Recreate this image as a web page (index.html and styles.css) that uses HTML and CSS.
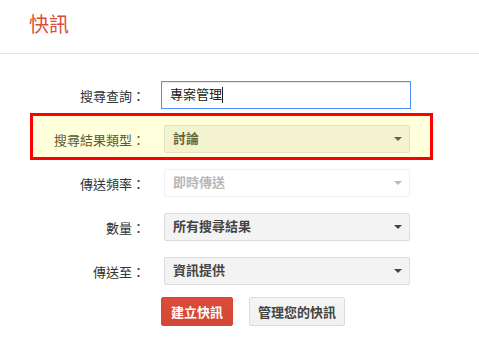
FILE: index.html
```html
<!DOCTYPE html>
<html lang="zh-Hant">
<head>
  <meta charset="UTF-8" />
  <title>快訊</title>
  <link rel="stylesheet" href="styles.css">
</head>
<body>
  <div class="header">
    <h1 class="title">快訊</h1>
  </div>

  <form class="alert-form">
    <div class="row">
      <label class="label" for="query">搜尋查詢：</label>
      <div class="query">專案管理<span class="caret"></span></div>
    </div>

    <div class="row highlight">
      <span class="label">搜尋結果類型：</span>
      <div class="select">討論</div>
    </div>

    <div class="row">
      <span class="label">傳送頻率：</span>
      <div class="select disabled">即時傳送</div>
    </div>

    <div class="row">
      <span class="label">數量：</span>
      <div class="select">所有搜尋結果</div>
    </div>

    <div class="row">
      <span class="label">傳送至：</span>
      <div class="select">資訊提供</div>
    </div>

    <div class="actions">
      <button type="button" class="btn btn-red">建立快訊</button>
      <button type="button" class="btn">管理您的快訊</button>
    </div>
  </form>
</body>
</html>
```

FILE: styles.css
```css
body {
  margin: 0;
  background: #fff;
  font-family: "Liberation Sans", "Noto Sans CJK TC", sans-serif;
  font-size: 13px;
  color: #222;
}
.header {
  padding: 13px 29px 16px;
  border-bottom: 1px solid #e5e5e5;
}
.title {
  margin: 0;
  font-size: 20px;
  font-weight: normal;
  line-height: 24px;
  color: #dd4b39;
}
.alert-form {
  display: flex;
  flex-direction: column;
  gap: 16px;
  width: 397px;
  margin: 27px 0 0 33px;
}
.row {
  display: grid;
  grid-template-columns: 112px 250px;
  column-gap: 16px;
  align-items: center;
  height: 28px;
}
.label {
  text-align: right;
  color: #333;
  white-space: nowrap;
}
.query {
  box-sizing: border-box;
  height: 28px;
  padding: 0 8px;
  border: 1px solid #4d90fe;
  box-shadow: inset 0 1px 2px rgba(0, 0, 0, 0.1);
  line-height: 26px;
  color: #222;
  display: flex;
  align-items: center;
}
.caret {
  display: inline-block;
  width: 1px;
  height: 16px;
  background: #222;
}
.select {
  position: relative;
  box-sizing: border-box;
  width: 246px;
  height: 28px;
  margin-left: 3px;
  padding: 0 8px;
  border: 1px solid #dcdcdc;
  border-radius: 2px;
  background: #f3f3f3;
  line-height: 26px;
  font-weight: bold;
  color: #444;
}
.select::after {
  content: "";
  position: absolute;
  right: 7px;
  top: 11px;
  border-left: 4px solid transparent;
  border-right: 4px solid transparent;
  border-top: 4px solid #444;
}
.select.disabled {
  background: #fff;
  border-color: #f0f0f0;
  color: #b8b8b8;
}
.select.disabled::after {
  border-top-color: #bbb;
}
.highlight {
  margin: -12px -3px -7px -3px;
  padding: 9px 0 4px;
  border: 3px solid #f00;
  background: #ffffdc;
}
.highlight .label {
  color: #5a5a33;
}
.highlight .select {
  background: #f3f3cf;
  border-color: #e3e3c0;
  color: #66663a;
}
.highlight .select::after {
  border-top-color: #66663a;
}
.actions {
  display: flex;
  gap: 16px;
  margin: -4px 0 0 128px;
}
.btn {
  box-sizing: border-box;
  height: 29px;
  padding: 0 8px;
  border: 1px solid #dcdcdc;
  border-radius: 2px;
  background: linear-gradient(#f5f5f5, #f1f1f1);
  font-family: inherit;
  font-size: 13px;
  font-weight: bold;
  color: #444;
}
.btn-red {
  padding: 0 9px;
  border-color: #d14836;
  background: linear-gradient(#dd4b39, #d14836);
  color: #fff;
}
```
